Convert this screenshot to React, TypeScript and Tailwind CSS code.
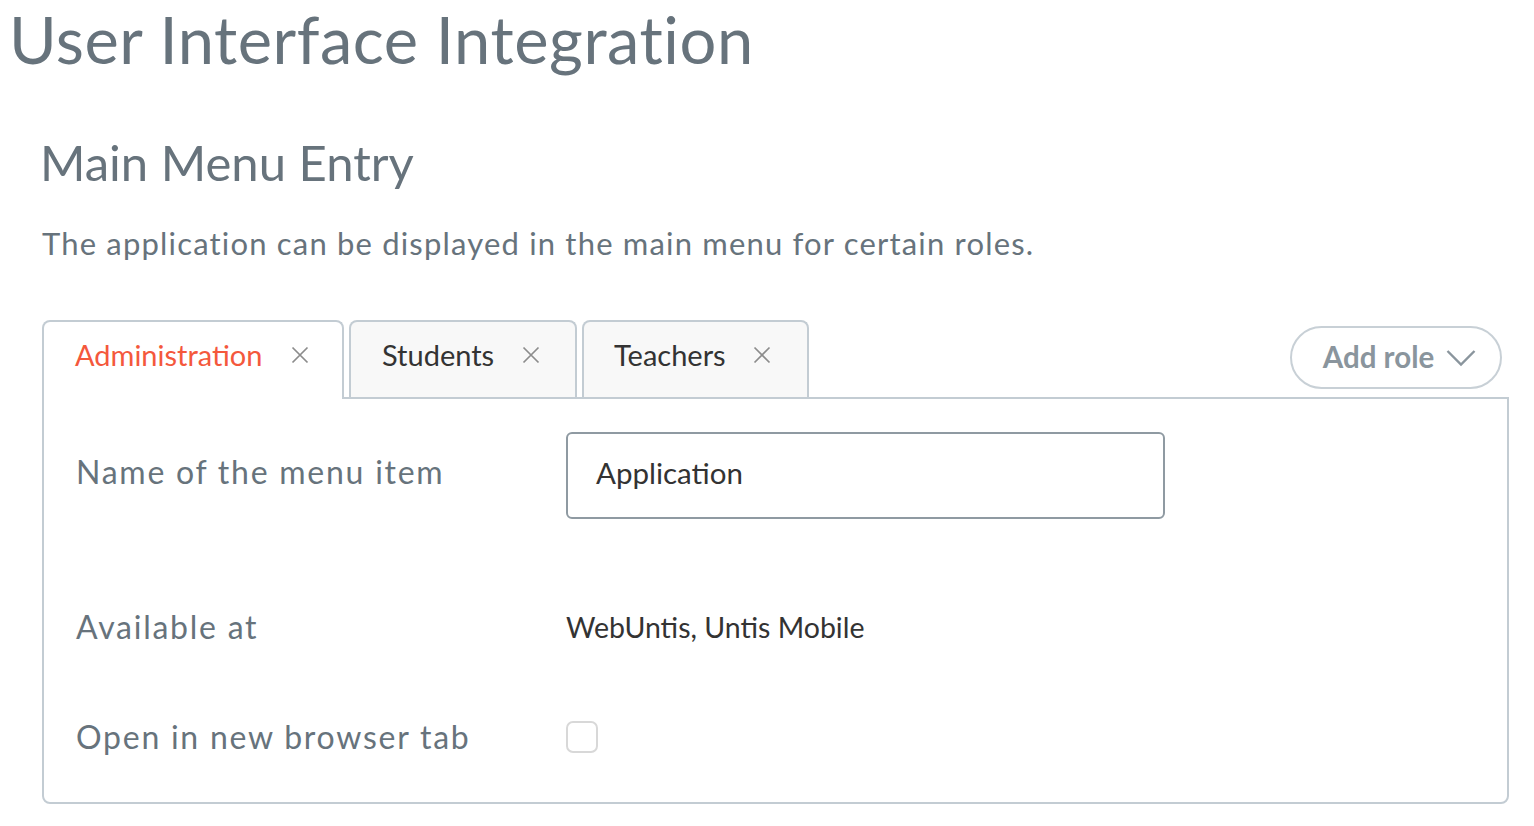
import React from "react";

const X = () => (
  <svg width="18" height="18" viewBox="0 0 18 18" className="shrink-0">
    <path d="M1.5 1.5 L16.5 16.5 M16.5 1.5 L1.5 16.5" stroke="#8c8c8c" strokeWidth="1.7" fill="none" />
  </svg>
);

export default function App() {
  return (
    <div className="min-h-[826px] bg-white pl-[42px] pr-[25px] text-[#67737c]" style={{ fontFamily: "Lato, 'Noto Sans', sans-serif" }}>
      <h1 className="-ml-[33px] pt-[3px] text-[65px] leading-[72px] font-normal tracking-[0.55px]">User Interface Integration</h1>
      <h2 className="-ml-[2px] mt-[59px] text-[49px] leading-[56px] font-normal">Main Menu Entry</h2>
      <p className="mt-[33px] text-[31px] leading-[40px] tracking-[1.18px]">The application can be displayed in the main menu for certain roles.</p>

      <div className="mt-[57px] flex items-end">
        <div className="relative z-10 -mb-[2px] flex h-[79px] w-[302px] items-center gap-[28px] rounded-t-[8px] border-2 border-b-0 border-[#c3ccd3] bg-white pb-[11px] pl-[31px]">
          <span className="text-[29px] text-[#f4583c]">Administration</span>
          <X />
        </div>
        <div className="ml-[5px] flex h-[77px] w-[228px] items-center gap-[28px] rounded-t-[8px] border-2 border-b-0 border-[#c3ccd3] bg-[#f8f8f8] pb-[9px] pl-[31px]">
          <span className="text-[29px] text-[#333]">Students</span>
          <X />
        </div>
        <div className="ml-[5px] flex h-[77px] w-[227px] items-center gap-[27px] rounded-t-[8px] border-2 border-b-0 border-[#c3ccd3] bg-[#f8f8f8] pb-[9px] pl-[30px]">
          <span className="text-[29px] text-[#333]">Teachers</span>
          <X />
        </div>
        <div className="ml-auto mb-[8px] mr-[7px] flex h-[63px] w-[212px] items-center justify-center gap-[12px] rounded-full border-2 border-[#c8d0d6] pl-[7px] text-[29.5px] font-bold text-[#8a959d]">
          <span>Add role</span>
          <svg width="30" height="18" viewBox="0 0 30 18">
            <path d="M1.5 2 L15 15.5 L28.5 2" stroke="#8a959d" strokeWidth="2.4" fill="none" />
          </svg>
        </div>
      </div>

      <div className="h-[407px] rounded-b-[8px] border-2 border-[#c3ccd3] pl-[32px] pt-[33px]">
        <div className="grid grid-cols-[490px_1fr] items-center">
          <div className="mb-[8px] text-[32px] leading-[40px] tracking-[1.75px]">Name of the menu item</div>
          <div className="flex h-[87px] w-[599px] items-center rounded-[6px] border-2 border-[#8f9aa2] pb-[5px] pl-[28px] text-[29.5px] text-[#333]">Application</div>

          <div className="mt-[88px] text-[32px] leading-[40px] tracking-[1.75px]">Available at</div>
          <div className="mt-[88px] text-[28.5px] leading-[40px] text-[#333]">WebUntis, Untis Mobile</div>

          <div className="mt-[70px] text-[32px] leading-[40px] tracking-[1.75px]">Open in new browser tab</div>
          <div className="mt-[70px]">
            <div className="h-[32px] w-[32px] rounded-[7px] border-2 border-[#d8d8d8]" />
          </div>
        </div>
      </div>
    </div>
  );
}
